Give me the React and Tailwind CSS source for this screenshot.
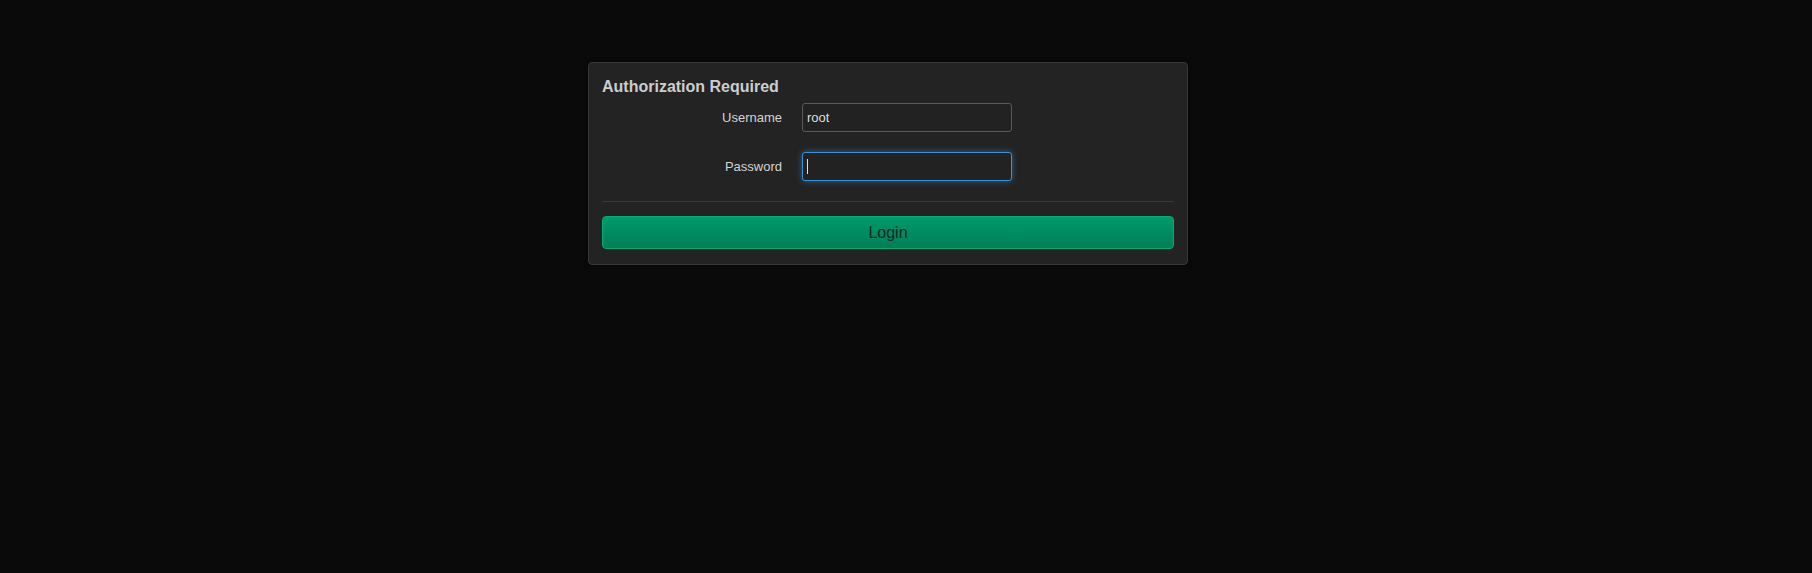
import { useState } from 'react';

function App() {
  const [username, setUsername] = useState('root');

  return (
    <div
      className="min-h-screen w-full bg-[#0a0a0a] pt-[62px] pl-[588px]"
      style={{ fontFamily: '"Liberation Sans", Arial, sans-serif' }}
    >
      <div className="w-[600px] rounded-[4px] border border-[#383838] bg-[#232323] px-[13px] pt-[14px] pb-[15px] shadow-[0_0_4px_rgba(0,0,0,0.6)]">
        <h2 className="h-5 text-[16px] leading-5 font-bold text-[#cdcdcd]">Authorization Required</h2>

        <div className="mt-[6px] flex flex-col gap-[20px]">
          <div className="flex items-center">
            <label className="w-[180px] text-right text-[13px] text-[#d4d4d4]">Username</label>
            <input
              value={username}
              onChange={(e) => setUsername(e.target.value)}
              className="ml-[20px] h-[29px] w-[210px] rounded-[3px] border border-[#5a5a5a] bg-[#222] px-[4px] text-[13px] text-[#dedede] outline-none"
            />
          </div>
          <div className="flex items-center">
            <label className="w-[180px] text-right text-[13px] text-[#d4d4d4]">Password</label>
            <div className="ml-[20px] flex h-[29px] w-[210px] items-center rounded-[3px] border border-[#3c92d4] bg-[#222] px-[4px] shadow-[0_0_6px_rgba(60,146,212,0.55)]">
              <span className="h-[15px] w-px bg-[#e0e0e0]" />
            </div>
          </div>
        </div>

        <div className="mt-[20px] h-px bg-[#383838]" />

        <button className="mt-[14px] h-[33px] w-full rounded-[4px] border border-[#00ad72] bg-gradient-to-b from-[#009a6b] to-[#007e57] text-[16px] text-[#15251d]">
          Login
        </button>
      </div>
    </div>
  );
}

export default App;
